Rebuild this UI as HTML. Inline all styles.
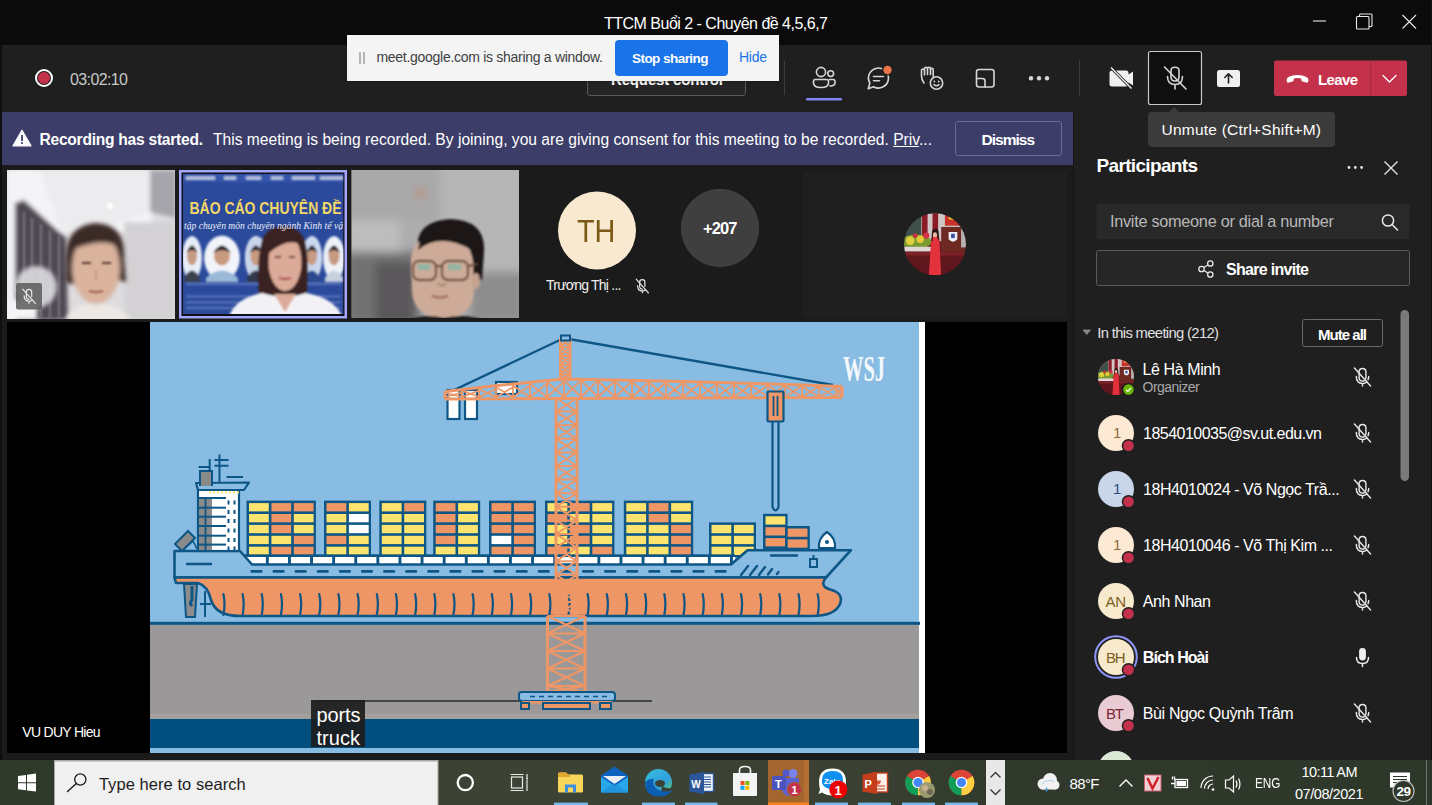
<!DOCTYPE html>
<html><head><meta charset="utf-8">
<style>
*{box-sizing:border-box;margin:0;padding:0}
html,body{width:1432px;height:805px;overflow:hidden;background:#1b1b1b;font-family:"Liberation Sans",sans-serif;}
.a{position:absolute;}
.t{position:absolute;white-space:nowrap;line-height:1;}
</style></head><body>
<!-- title bar -->
<div class="a" style="left:0;top:0;width:1432px;height:45px;background:#0b0b0b"></div>
<div class="t" style="left:604.0px;top:16.00px;font-size:16.0px;color:#fff;letter-spacing:-0.508px;">TTCM Buổi 2 - Chuyên đề 4,5,6,7</div>
<!-- toolbar -->
<div class="a" style="left:0;top:45px;width:1432px;height:67px;background:#1f1f1f"></div>
<!-- left border -->
<div class="a" style="left:0;top:45px;width:2px;height:715px;background:#0f0f0f"></div>
<!-- window right border -->
<div class="a" style="left:1431px;top:0;width:1px;height:760px;background:#121212"></div>
<!-- banner -->
<div class="a" style="left:2px;top:112px;width:1071px;height:53px;background:#3c3d68"></div>
<!-- right panel -->
<div class="a" style="left:1073px;top:112px;width:1px;height:648px;background:#141414"></div>
<div class="a" style="left:1074px;top:112px;width:357px;height:648px;background:#1f1f1f"></div>
<!-- main share area -->
<div class="a" style="left:7px;top:322px;width:1060px;height:431px;background:#000"></div>
<svg class="a" style="left:0;top:165px" width="1073" height="157" viewBox="0 165 1073 157">
<defs>
<filter id="b1" x="-20%" y="-20%" width="140%" height="140%"><feGaussianBlur stdDeviation="2.2"/></filter>
<filter id="b2" x="-20%" y="-20%" width="140%" height="140%"><feGaussianBlur stdDeviation="1.2"/></filter>
<filter id="b3" x="-50%" y="-50%" width="200%" height="200%"><feGaussianBlur stdDeviation="5"/></filter>
<clipPath id="c1"><rect x="7" y="170" width="168" height="149"/></clipPath>
<clipPath id="c2"><rect x="183" y="174" width="160.5" height="140"/></clipPath>
<clipPath id="c3"><rect x="351.5" y="170" width="167.5" height="148"/></clipPath>
<clipPath id="c5"><circle cx="935" cy="244.3" r="31"/></clipPath>
<linearGradient id="g3" x1="0" y1="0" x2="1" y2="0"><stop offset="0" stop-color="#7e7c7d"/><stop offset="0.5" stop-color="#a4a3a4"/><stop offset="1" stop-color="#b9b8b9"/></linearGradient>
</defs>
<rect x="803" y="171.5" width="264" height="146" fill="#1f1f1f"/>
<g clip-path="url(#c1)">
<rect x="7" y="170" width="168" height="149" fill="#dedcdf"/>
<g filter="url(#b1)">
<rect x="7" y="170" width="145" height="62" fill="#f4f3f5"/>
<path d="M40 170 H150 V212 Q120 222 90 236 L60 228 Z" fill="#ecebee"/>
<path d="M150 170 H176 V218 Q160 214 150 212 Z" fill="#a6a5ab"/>
<rect x="124" y="222" width="52" height="98" fill="#d3d1d4"/>
<rect x="7" y="200" width="10" height="120" fill="#f2f2f4"/>
<path d="M15 203 L24 200 L66 238 L68 320 L15 320 Z" fill="#4f4a55"/>
</g>
<g filter="url(#b2)" stroke="#7a7580" stroke-width="2" fill="none"><path d="M24 212 V318 M32 218 V318 M41 224 V318 M50 230 V318 M59 236 V318"/></g>
<g filter="url(#b1)">
<circle cx="36" cy="287" r="21" fill="#dddce0" fill-opacity="0.9"/>
<rect x="7" y="300" width="30" height="20" fill="#f4f4f6"/>
<path d="M66 262 Q64 226 95 223 Q126 224 124 258 L126 282 L118 280 L117 250 Q100 238 76 250 L74 285 L66 282 Z" fill="#3b2a26"/>
<ellipse cx="96" cy="268" rx="24" ry="36" fill="#dab39d"/>
<path d="M72 248 Q80 230 96 230 Q114 230 120 248 Q104 236 72 250 Z" fill="#3b2a26"/>
<path d="M64 320 Q80 300 96 306 Q114 300 132 320 Z" fill="#efe9e6"/>
</g>
<g filter="url(#b2)"><path d="M82 263 H91 M102 263 H111" stroke="#5a3a30" stroke-width="2.2"/><path d="M96 270 V280" stroke="#c09080" stroke-width="1.5"/><path d="M89 291 Q96 293 103 291" stroke="#a05a50" stroke-width="2.2"/><circle cx="110" cy="206" r="3" fill="#fff"/></g>
</g>
<rect x="16" y="283" width="26" height="26.5" rx="2" fill="#5a5a5a" fill-opacity="0.85"/>
<g transform="translate(29 296.2) scale(0.75)" fill="none" stroke="#e8e8e8" stroke-width="1.6" stroke-linecap="round">
<path d="M-3.6 -4 V-5.5 Q-3.6 -9 0 -9 Q3.6 -9 3.6 -5.5 V0.5 M-3.6 -4 V0.5 Q-3.6 4.3 0 4.3"/>
<path d="M-6.5 -0.5 Q-6.5 6.8 0 6.8 Q2.8 6.8 4.5 5.2 M0 6.8 V9.5"/><path d="M-8.5 -9.5 L8.5 9.5"/></g>
<rect x="179" y="170" width="168" height="148.5" fill="#a4a7ff"/>
<rect x="181.5" y="172.5" width="163" height="143.5" fill="#101018"/>
<g clip-path="url(#c2)">
<rect x="183" y="174" width="160.5" height="140" fill="#2b4a9c"/>
<g filter="url(#b2)">
<rect x="183" y="174" width="160.5" height="8" fill="#3456aa"/>
<rect x="186" y="176.5" width="29" height="3" fill="#c8d0ea"/>
<rect x="224" y="176.5" width="12" height="3" fill="#c8d0ea"/>
<rect x="246" y="176.5" width="15" height="3" fill="#c8d0ea"/>
<rect x="271" y="176.5" width="12" height="3" fill="#c8d0ea"/>
<rect x="292" y="176.5" width="23" height="3" fill="#c8d0ea"/>
<rect x="320" y="176.5" width="23" height="3" fill="#c8d0ea"/>
<ellipse cx="192" cy="258" rx="10" ry="22" fill="#dfe6f4"/>
<ellipse cx="192" cy="258" rx="8.5" ry="20.5" fill="#e8eef8"/>
<path d="M184.0 278 Q192 263 200.0 278 V282 H184.0 Z" fill="#3a4050"/>
<ellipse cx="192" cy="256" rx="5.0" ry="9.2" fill="#c89a80"/>
<path d="M186.5 253 Q192 238 197.5 253 Q192 247 186.5 253 Z" fill="#1e1e22"/>
<ellipse cx="222" cy="258" rx="18" ry="22.5" fill="#dfe6f4"/>
<ellipse cx="222" cy="258" rx="16.5" ry="21.0" fill="#f2f4fa"/>
<path d="M206.0 278 Q222 263 238.0 278 V282 H206.0 Z" fill="#9ab8d8"/>
<ellipse cx="222" cy="256" rx="8.0" ry="9.4" fill="#c89a80"/>
<path d="M213.2 253 Q222 238 230.8 253 Q222 247 213.2 253 Z" fill="#1e1e22"/>
<ellipse cx="256" cy="258" rx="11" ry="22" fill="#dfe6f4"/>
<ellipse cx="256" cy="258" rx="9.5" ry="20.5" fill="#c8d4e8"/>
<path d="M247.0 278 Q256 263 265.0 278 V282 H247.0 Z" fill="#303848"/>
<ellipse cx="256" cy="256" rx="5.5" ry="9.2" fill="#c89a80"/>
<path d="M249.9 253 Q256 238 262.1 253 Q256 247 249.9 253 Z" fill="#1e1e22"/>
<ellipse cx="312" cy="258" rx="10" ry="22" fill="#dfe6f4"/>
<ellipse cx="312" cy="258" rx="8.5" ry="20.5" fill="#c8d8f0"/>
<path d="M304.0 278 Q312 263 320.0 278 V282 H304.0 Z" fill="#2a4a90"/>
<ellipse cx="312" cy="256" rx="5.0" ry="9.2" fill="#c89a80"/>
<path d="M306.5 253 Q312 238 317.5 253 Q312 247 306.5 253 Z" fill="#1e1e22"/>
<ellipse cx="334" cy="258" rx="11" ry="22" fill="#dfe6f4"/>
<ellipse cx="334" cy="258" rx="9.5" ry="20.5" fill="#eef2f8"/>
<path d="M325.0 278 Q334 263 343.0 278 V282 H325.0 Z" fill="#c8d0e0"/>
<ellipse cx="334" cy="256" rx="5.5" ry="9.2" fill="#c89a80"/>
<path d="M327.9 253 Q334 238 340.1 253 Q334 247 327.9 253 Z" fill="#1e1e22"/>
<rect x="186" y="283" width="155" height="1.8" fill="#8ea2d8" fill-opacity="0.55"/>
<rect x="186" y="295.5" width="155" height="1.8" fill="#8ea2d8" fill-opacity="0.55"/>
<rect x="186" y="301.5" width="155" height="1.8" fill="#8ea2d8" fill-opacity="0.55"/>
<rect x="186" y="307" width="155" height="1.8" fill="#8ea2d8" fill-opacity="0.55"/>
<path d="M259 300 Q256 262 262 240 Q268 226 284 226 Q302 227 306 245 Q310 268 306 300 Z" fill="#3a2420"/>
<ellipse cx="285" cy="262" rx="16.5" ry="29" fill="#dcaa98"/>
<path d="M266 250 Q268 232 285 232 Q300 232 303 246 Q290 236 270 252 Z" fill="#3a2420"/>
<path d="M229 316 Q236 298 262 293 Q285 300 306 293 Q334 298 342 316 Z" fill="#f2f2f6"/>
<path d="M274 294 L285 312 L296 294 Z" fill="#dcaa98"/>
</g>
<g filter="url(#b2)"><path d="M275 257 H281 M289 257 H295" stroke="#5a3a30" stroke-width="1.6"/><path d="M279 278 Q285 280 291 278" stroke="#a04848" stroke-width="1.8"/></g>
</g>
<text x="189.5" y="214" font-family="Liberation Sans" font-weight="bold" font-size="16.5" fill="#f3d766" textLength="152" lengthAdjust="spacingAndGlyphs">BÁO CÁO CHUYÊN ĐỀ</text>
<text x="184" y="229" font-family="Liberation Serif" font-style="italic" font-size="11" fill="#e8ecf8" textLength="159" lengthAdjust="spacingAndGlyphs">tập chuyên môn chuyên ngành Kinh tế vậ</text>
<g clip-path="url(#c3)">
<rect x="351.5" y="170" width="167.5" height="148" fill="#adadad"/>
<g filter="url(#b3)">
<rect x="340" y="160" width="190" height="60" fill="#a9a9aa"/>
<rect x="440" y="160" width="90" height="120" fill="#b6b6b7"/>
<rect x="345" y="220" width="55" height="32" fill="#bdbdbe"/>
<path d="M345 252 H420 V325 H345 Z" fill="#737273"/>
<path d="M375 262 H415 V325 H375 Z" fill="#5a595a"/>
<rect x="470" y="272" width="55" height="50" fill="#8e8d8e"/>
<circle cx="421" cy="193" r="4.5" fill="#c08a60"/>
</g>
<g filter="url(#b2)">
<path d="M418 250 Q414 222 450 219 Q486 220 484 252 L482 280 L472 280 L470 250 Q450 238 422 252 Z" fill="#1a1818"/>
<path d="M411 262 Q411 236 440 236 Q470 236 473 262 L474 292 Q472 317 444 318 Q414 317 412 292 Z" fill="#cdab98"/>
<path d="M418 250 Q440 232 472 250 L470 240 Q450 226 420 240 Z" fill="#1a1818"/>
<ellipse cx="476" cy="281" rx="4" ry="8" fill="#c4a290"/>
<path d="M400 325 Q420 312 444 318 Q470 312 495 325 Z" fill="#1a1a1a"/>
</g>
<g filter="url(#b2)" fill="none" stroke="#6a5040" stroke-width="1.8"><rect x="413" y="261" width="23" height="19" rx="6"/><rect x="442" y="261" width="26" height="19" rx="6"/><path d="M436 266 H442 M468 266 L478 264"/></g>
<g filter="url(#b2)"><rect x="418" y="264" width="12" height="6" fill="#7ab8a8" fill-opacity="0.7"/><rect x="448" y="264" width="13" height="6" fill="#7ab8a8" fill-opacity="0.7"/><path d="M438 283 Q442 288 446 283" stroke="#a07a68" stroke-width="1.5" fill="none"/><path d="M432 296 Q440 299 448 296" stroke="#9a6a5a" stroke-width="2" fill="none"/></g>
</g>
<circle cx="597" cy="230.5" r="39" fill="#f8e9d0"/>
<circle cx="720" cy="228" r="39.2" fill="#3f3f3f"/>
<g transform="translate(642.3 286) scale(0.72)" fill="none" stroke="#e8e8e8" stroke-width="1.7" stroke-linecap="round">
<path d="M-3.6 -4 V-5.5 Q-3.6 -9 0 -9 Q3.6 -9 3.6 -5.5 V0.5 M-3.6 -4 V0.5 Q-3.6 4.3 0 4.3"/>
<path d="M-6.5 -0.5 Q-6.5 6.8 0 6.8 Q2.8 6.8 4.5 5.2 M0 6.8 V9.5"/><path d="M-8.5 -9.5 L8.5 9.5"/></g>
<defs><clipPath id="c5x"><circle cx="935" cy="244.3" r="31"/></clipPath></defs><g clip-path="url(#c5x)"><g transform="translate(904 213.3) scale(0.6200)" filter="url(#b2)"><rect x="0" y="0" width="100" height="100" fill="#6a1c22"/><rect x="0" y="0" width="100" height="45" fill="#cfc6c6"/><rect x="0" y="0" width="28" height="40" fill="#3f5048"/><rect x="29" y="0" width="9" height="42" fill="#8a1a28"/><rect x="46" y="0" width="9" height="38" fill="#8a1a28"/><rect x="66" y="0" width="34" height="20" fill="#c8302a"/><rect x="72" y="6" width="20" height="4" fill="#e8c040"/><rect x="60" y="22" width="40" height="40" fill="#6e2a22"/><path d="M72 30 H86 V42 Q79 50 72 42 Z" fill="#eef0f8"/><rect x="76" y="33" width="6" height="7" fill="#4050a0"/><rect x="92" y="25" width="8" height="30" fill="#b8b0b0"/><ellipse cx="20" cy="46" rx="24" ry="12" fill="#7a9a30"/><circle cx="10" cy="44" r="7" fill="#e0d040"/><circle cx="26" cy="42" r="6" fill="#e8c838"/><circle cx="36" cy="36" r="5" fill="#d83048"/><circle cx="18" cy="36" r="4" fill="#c83040"/><rect x="0" y="54" width="48" height="8" fill="#e0d8d8"/><rect x="0" y="62" width="100" height="38" fill="#5e161c"/><path d="M0 62 H100 V68 H0 Z" fill="#7a2028"/><path d="M44 40 Q50 34 57 40 L60 100 H40 Z" fill="#e2303a"/><ellipse cx="50" cy="33" rx="4.5" ry="5.5" fill="#e8b8a0"/><path d="M45 32 Q45 25 50 25 Q56 25 56 32 L57 46 L54 40 L53 32 Q50 29 47 32 L46 44 L44 46 Z" fill="#2a1818"/></g></g>
</svg>
<div class="t" style="left:577.0px;top:216.00px;font-size:31.0px;color:#7a5a14;transform:scaleX(0.93);transform-origin:0 0;">TH</div>
<div class="t" style="left:703.0px;top:220.00px;font-size:16.5px;font-weight:bold;color:#fff;letter-spacing:-0.924px;">+207</div>
<div class="t" style="left:546.0px;top:278.00px;font-size:14.0px;color:#f0f0f0;letter-spacing:-0.775px;">Trương Thị ...</div>
<svg class="a" style="left:150px;top:322px" width="775" height="431" viewBox="150 322 775 431">
<rect x="150" y="322" width="770" height="302" fill="#89bce3"/>
<rect x="150" y="624" width="770" height="92" fill="#9a9899"/>
<rect x="150" y="714" width="770" height="5" fill="#a39f9c"/>
<rect x="150" y="719" width="770" height="29" fill="#004f7e"/>
<rect x="150" y="748" width="770" height="5" fill="#89bce3"/>
<rect x="919" y="322" width="6" height="431" fill="#fff"/>
<rect x="150" y="621.8" width="770" height="3" fill="#0d5685"/>
<text x="843" y="381" font-family="Liberation Serif" font-weight="bold" font-size="35" fill="#f4f8fb" textLength="42" lengthAdjust="spacingAndGlyphs">WSJ</text>
<path d="M562 339 L452 391 M569 339 L833 385" stroke="#0d5685" stroke-width="2.4" fill="none"/>
<rect x="447.5" y="390" width="12" height="29" fill="#fff" stroke="#0d5685" stroke-width="2.2"/>
<rect x="465" y="390" width="12" height="29" fill="#fff" stroke="#0d5685" stroke-width="2.2"/>
<rect x="496" y="382" width="21" height="12" fill="#fff" stroke="#0d5685" stroke-width="2.2"/>
<rect x="246.5" y="500.6" width="69.4" height="56.7" fill="#0d5685"/>
<rect x="249.0" y="503.1" width="19.8" height="8.3" fill="#fde46f"/>
<rect x="271.4" y="503.1" width="19.8" height="8.3" fill="#ee9666"/>
<rect x="293.8" y="503.1" width="19.8" height="8.3" fill="#ee9666"/>
<rect x="249.0" y="514.0" width="19.8" height="8.3" fill="#fde46f"/>
<rect x="271.4" y="514.0" width="19.8" height="8.3" fill="#ee9666"/>
<rect x="293.8" y="514.0" width="19.8" height="8.3" fill="#fde46f"/>
<rect x="249.0" y="524.9" width="19.8" height="8.3" fill="#fde46f"/>
<rect x="271.4" y="524.9" width="19.8" height="8.3" fill="#ee9666"/>
<rect x="293.8" y="524.9" width="19.8" height="8.3" fill="#fde46f"/>
<rect x="249.0" y="535.8" width="19.8" height="8.3" fill="#fde46f"/>
<rect x="271.4" y="535.8" width="19.8" height="8.3" fill="#fde46f"/>
<rect x="293.8" y="535.8" width="19.8" height="8.3" fill="#ee9666"/>
<rect x="249.0" y="546.7" width="19.8" height="8.3" fill="#fde46f"/>
<rect x="271.4" y="546.7" width="19.8" height="8.3" fill="#ee9666"/>
<rect x="293.8" y="546.7" width="19.8" height="8.3" fill="#ee9666"/>
<rect x="324.0" y="500.6" width="47.0" height="56.7" fill="#0d5685"/>
<rect x="326.5" y="503.1" width="19.8" height="8.3" fill="#ee9666"/>
<rect x="348.9" y="503.1" width="19.8" height="8.3" fill="#fde46f"/>
<rect x="326.5" y="514.0" width="19.8" height="8.3" fill="#fde46f"/>
<rect x="348.9" y="514.0" width="19.8" height="8.3" fill="#ffffff"/>
<rect x="326.5" y="524.9" width="19.8" height="8.3" fill="#fde46f"/>
<rect x="348.9" y="524.9" width="19.8" height="8.3" fill="#ffffff"/>
<rect x="326.5" y="535.8" width="19.8" height="8.3" fill="#ee9666"/>
<rect x="348.9" y="535.8" width="19.8" height="8.3" fill="#fde46f"/>
<rect x="326.5" y="546.7" width="19.8" height="8.3" fill="#fde46f"/>
<rect x="348.9" y="546.7" width="19.8" height="8.3" fill="#fde46f"/>
<rect x="379.3" y="500.6" width="47.0" height="56.7" fill="#0d5685"/>
<rect x="381.8" y="503.1" width="19.8" height="8.3" fill="#fde46f"/>
<rect x="404.2" y="503.1" width="19.8" height="8.3" fill="#ee9666"/>
<rect x="381.8" y="514.0" width="19.8" height="8.3" fill="#fde46f"/>
<rect x="404.2" y="514.0" width="19.8" height="8.3" fill="#fde46f"/>
<rect x="381.8" y="524.9" width="19.8" height="8.3" fill="#fde46f"/>
<rect x="404.2" y="524.9" width="19.8" height="8.3" fill="#fde46f"/>
<rect x="381.8" y="535.8" width="19.8" height="8.3" fill="#fde46f"/>
<rect x="404.2" y="535.8" width="19.8" height="8.3" fill="#fde46f"/>
<rect x="381.8" y="546.7" width="19.8" height="8.3" fill="#fde46f"/>
<rect x="404.2" y="546.7" width="19.8" height="8.3" fill="#fde46f"/>
<rect x="433.2" y="500.6" width="47.0" height="56.7" fill="#0d5685"/>
<rect x="435.7" y="503.1" width="19.8" height="8.3" fill="#ee9666"/>
<rect x="458.1" y="503.1" width="19.8" height="8.3" fill="#fde46f"/>
<rect x="435.7" y="514.0" width="19.8" height="8.3" fill="#ee9666"/>
<rect x="458.1" y="514.0" width="19.8" height="8.3" fill="#fde46f"/>
<rect x="435.7" y="524.9" width="19.8" height="8.3" fill="#ee9666"/>
<rect x="458.1" y="524.9" width="19.8" height="8.3" fill="#fde46f"/>
<rect x="435.7" y="535.8" width="19.8" height="8.3" fill="#ee9666"/>
<rect x="458.1" y="535.8" width="19.8" height="8.3" fill="#fde46f"/>
<rect x="435.7" y="546.7" width="19.8" height="8.3" fill="#fde46f"/>
<rect x="458.1" y="546.7" width="19.8" height="8.3" fill="#fde46f"/>
<rect x="489.0" y="500.6" width="47.0" height="56.7" fill="#0d5685"/>
<rect x="491.5" y="503.1" width="19.8" height="8.3" fill="#ee9666"/>
<rect x="513.9" y="503.1" width="19.8" height="8.3" fill="#ee9666"/>
<rect x="491.5" y="514.0" width="19.8" height="8.3" fill="#ee9666"/>
<rect x="513.9" y="514.0" width="19.8" height="8.3" fill="#ee9666"/>
<rect x="491.5" y="524.9" width="19.8" height="8.3" fill="#ee9666"/>
<rect x="513.9" y="524.9" width="19.8" height="8.3" fill="#ee9666"/>
<rect x="491.5" y="535.8" width="19.8" height="8.3" fill="#ffffff"/>
<rect x="513.9" y="535.8" width="19.8" height="8.3" fill="#ee9666"/>
<rect x="491.5" y="546.7" width="19.8" height="8.3" fill="#ee9666"/>
<rect x="513.9" y="546.7" width="19.8" height="8.3" fill="#ee9666"/>
<rect x="545.0" y="500.6" width="69.4" height="56.7" fill="#0d5685"/>
<rect x="547.5" y="503.1" width="19.8" height="8.3" fill="#fde46f"/>
<rect x="569.9" y="503.1" width="19.8" height="8.3" fill="#ee9666"/>
<rect x="592.3" y="503.1" width="19.8" height="8.3" fill="#fde46f"/>
<rect x="547.5" y="514.0" width="19.8" height="8.3" fill="#ee9666"/>
<rect x="569.9" y="514.0" width="19.8" height="8.3" fill="#fde46f"/>
<rect x="592.3" y="514.0" width="19.8" height="8.3" fill="#fde46f"/>
<rect x="547.5" y="524.9" width="19.8" height="8.3" fill="#fde46f"/>
<rect x="569.9" y="524.9" width="19.8" height="8.3" fill="#ee9666"/>
<rect x="592.3" y="524.9" width="19.8" height="8.3" fill="#fde46f"/>
<rect x="547.5" y="535.8" width="19.8" height="8.3" fill="#fde46f"/>
<rect x="569.9" y="535.8" width="19.8" height="8.3" fill="#ee9666"/>
<rect x="592.3" y="535.8" width="19.8" height="8.3" fill="#fde46f"/>
<rect x="547.5" y="546.7" width="19.8" height="8.3" fill="#ee9666"/>
<rect x="569.9" y="546.7" width="19.8" height="8.3" fill="#fde46f"/>
<rect x="592.3" y="546.7" width="19.8" height="8.3" fill="#ee9666"/>
<rect x="623.8" y="500.6" width="69.4" height="56.7" fill="#0d5685"/>
<rect x="626.3" y="503.1" width="19.8" height="8.3" fill="#fde46f"/>
<rect x="648.7" y="503.1" width="19.8" height="8.3" fill="#ee9666"/>
<rect x="671.1" y="503.1" width="19.8" height="8.3" fill="#fde46f"/>
<rect x="626.3" y="514.0" width="19.8" height="8.3" fill="#fde46f"/>
<rect x="648.7" y="514.0" width="19.8" height="8.3" fill="#ee9666"/>
<rect x="671.1" y="514.0" width="19.8" height="8.3" fill="#fde46f"/>
<rect x="626.3" y="524.9" width="19.8" height="8.3" fill="#fde46f"/>
<rect x="648.7" y="524.9" width="19.8" height="8.3" fill="#fde46f"/>
<rect x="671.1" y="524.9" width="19.8" height="8.3" fill="#ee9666"/>
<rect x="626.3" y="535.8" width="19.8" height="8.3" fill="#fde46f"/>
<rect x="648.7" y="535.8" width="19.8" height="8.3" fill="#fde46f"/>
<rect x="671.1" y="535.8" width="19.8" height="8.3" fill="#ee9666"/>
<rect x="626.3" y="546.7" width="19.8" height="8.3" fill="#fde46f"/>
<rect x="648.7" y="546.7" width="19.8" height="8.3" fill="#fde46f"/>
<rect x="671.1" y="546.7" width="19.8" height="8.3" fill="#ee9666"/>
<rect x="709.0" y="522.4" width="47.0" height="34.9" fill="#0d5685"/>
<rect x="711.5" y="524.9" width="19.8" height="8.3" fill="#fde46f"/>
<rect x="733.9" y="524.9" width="19.8" height="8.3" fill="#fde46f"/>
<rect x="711.5" y="535.8" width="19.8" height="8.3" fill="#fde46f"/>
<rect x="733.9" y="535.8" width="19.8" height="8.3" fill="#fde46f"/>
<rect x="711.5" y="546.7" width="19.8" height="8.3" fill="#fde46f"/>
<rect x="733.9" y="546.7" width="19.8" height="8.3" fill="#fde46f"/>
<rect x="763.0" y="513.8" width="24.6" height="45.8" fill="#0d5685"/>
<rect x="765.5" y="516.3" width="19.8" height="8.3" fill="#fde46f"/>
<rect x="765.5" y="527.2" width="19.8" height="8.3" fill="#ee9666"/>
<rect x="765.5" y="538.1" width="19.8" height="8.3" fill="#ee9666"/>
<rect x="765.5" y="549.0" width="19.8" height="8.3" fill="#ee9666"/>
<rect x="785.2" y="526.0" width="24.6" height="24.0" fill="#0d5685"/>
<rect x="787.7" y="528.5" width="19.8" height="8.3" fill="#ee9666"/>
<rect x="787.7" y="539.4" width="19.8" height="8.3" fill="#ee9666"/>
<rect x="245" y="554.3" width="490" height="12" fill="#0d5685"/>
<rect x="246.7" y="557" width="19.2" height="7.2" fill="#fff"/>
<rect x="268.8" y="557" width="19.2" height="7.2" fill="#fff"/>
<rect x="290.9" y="557" width="19.2" height="7.2" fill="#fff"/>
<rect x="313.0" y="557" width="19.2" height="7.2" fill="#fff"/>
<rect x="335.1" y="557" width="19.2" height="7.2" fill="#fff"/>
<rect x="357.2" y="557" width="19.2" height="7.2" fill="#fff"/>
<rect x="379.3" y="557" width="19.2" height="7.2" fill="#fff"/>
<rect x="401.4" y="557" width="19.2" height="7.2" fill="#fff"/>
<rect x="423.5" y="557" width="19.2" height="7.2" fill="#fff"/>
<rect x="445.6" y="557" width="19.2" height="7.2" fill="#fff"/>
<rect x="467.7" y="557" width="19.2" height="7.2" fill="#fff"/>
<rect x="489.8" y="557" width="19.2" height="7.2" fill="#fff"/>
<rect x="511.9" y="557" width="19.2" height="7.2" fill="#fff"/>
<rect x="534.0" y="557" width="19.2" height="7.2" fill="#fff"/>
<rect x="556.1" y="557" width="19.2" height="7.2" fill="#fff"/>
<rect x="578.2" y="557" width="19.2" height="7.2" fill="#fff"/>
<rect x="600.3" y="557" width="19.2" height="7.2" fill="#fff"/>
<rect x="622.4" y="557" width="19.2" height="7.2" fill="#fff"/>
<rect x="644.5" y="557" width="19.2" height="7.2" fill="#fff"/>
<rect x="666.6" y="557" width="19.2" height="7.2" fill="#fff"/>
<rect x="688.7" y="557" width="19.2" height="7.2" fill="#fff"/>
<rect x="710.8" y="557" width="19.2" height="7.2" fill="#fff"/>
<rect x="732.9" y="557" width="2.1" height="7.2" fill="#fff"/>
<path d="M174.5 551 H240 L252 564.5 H731 L747.5 550.2 H851 L826 577.5 H174.5 Z" fill="#89bce3" stroke="#0d5685" stroke-width="2.6" stroke-linejoin="round"/>
<rect x="250.5" y="570" width="12" height="2.8" rx="1" fill="#0d5685"/>
<rect x="272.6" y="570" width="12" height="2.8" rx="1" fill="#0d5685"/>
<rect x="294.7" y="570" width="12" height="2.8" rx="1" fill="#0d5685"/>
<rect x="316.8" y="570" width="12" height="2.8" rx="1" fill="#0d5685"/>
<rect x="338.9" y="570" width="12" height="2.8" rx="1" fill="#0d5685"/>
<rect x="361.0" y="570" width="12" height="2.8" rx="1" fill="#0d5685"/>
<rect x="383.1" y="570" width="12" height="2.8" rx="1" fill="#0d5685"/>
<rect x="405.2" y="570" width="12" height="2.8" rx="1" fill="#0d5685"/>
<rect x="427.3" y="570" width="12" height="2.8" rx="1" fill="#0d5685"/>
<rect x="449.4" y="570" width="12" height="2.8" rx="1" fill="#0d5685"/>
<rect x="471.5" y="570" width="12" height="2.8" rx="1" fill="#0d5685"/>
<rect x="493.6" y="570" width="12" height="2.8" rx="1" fill="#0d5685"/>
<rect x="515.7" y="570" width="12" height="2.8" rx="1" fill="#0d5685"/>
<rect x="537.8" y="570" width="12" height="2.8" rx="1" fill="#0d5685"/>
<rect x="559.9" y="570" width="12" height="2.8" rx="1" fill="#0d5685"/>
<rect x="582.0" y="570" width="12" height="2.8" rx="1" fill="#0d5685"/>
<rect x="604.1" y="570" width="12" height="2.8" rx="1" fill="#0d5685"/>
<rect x="626.2" y="570" width="12" height="2.8" rx="1" fill="#0d5685"/>
<rect x="648.3" y="570" width="12" height="2.8" rx="1" fill="#0d5685"/>
<rect x="670.4" y="570" width="12" height="2.8" rx="1" fill="#0d5685"/>
<rect x="692.5" y="570" width="12" height="2.8" rx="1" fill="#0d5685"/>
<rect x="714.6" y="570" width="12" height="2.8" rx="1" fill="#0d5685"/>
<path d="M741 575 L748 566 M750 575 L757 566 M759 575 L765 567 M768 574.5 L772 569 M777 574 L778.5 572" stroke="#0d5685" stroke-width="2.4" stroke-linecap="round"/>
<path d="M187 564 H211 M771 555.5 H797" stroke="#0d5685" stroke-width="2.4" stroke-linecap="round"/>
<path d="M810 567 V559 H817 V567 Z M813.5 559 V555" fill="none" stroke="#0d5685" stroke-width="2"/>
<path d="M819 548 Q818 538 827 532 Q836 538 835 548 Z" fill="#fff" stroke="#0d5685" stroke-width="2.2"/>
<circle cx="827" cy="542" r="2" fill="#0d5685"/>
<path d="M174.5 577.5 H826 Q819 586 830 589.5 Q844 593 840 604 Q835 616 812 616 H240 Q216 616 211 600 Q208 586 198 583 H176 Z" fill="#ee9666" stroke="#0d5685" stroke-width="2.6" stroke-linejoin="round"/>
<path d="M223.4 594 Q225.6 604 223.4 615" fill="none" stroke="#0d5685" stroke-width="2.2" stroke-linecap="round"/>
<path d="M242.6 594 Q244.8 604 242.6 615" fill="none" stroke="#0d5685" stroke-width="2.2" stroke-linecap="round"/>
<path d="M261.7 594 Q263.9 604 261.7 615" fill="none" stroke="#0d5685" stroke-width="2.2" stroke-linecap="round"/>
<path d="M280.9 594 Q283.1 604 280.9 615" fill="none" stroke="#0d5685" stroke-width="2.2" stroke-linecap="round"/>
<path d="M300.1 594 Q302.3 604 300.1 615" fill="none" stroke="#0d5685" stroke-width="2.2" stroke-linecap="round"/>
<path d="M319.2 594 Q321.4 604 319.2 615" fill="none" stroke="#0d5685" stroke-width="2.2" stroke-linecap="round"/>
<path d="M338.4 594 Q340.6 604 338.4 615" fill="none" stroke="#0d5685" stroke-width="2.2" stroke-linecap="round"/>
<path d="M357.6 594 Q359.8 604 357.6 615" fill="none" stroke="#0d5685" stroke-width="2.2" stroke-linecap="round"/>
<path d="M376.8 594 Q379.0 604 376.8 615" fill="none" stroke="#0d5685" stroke-width="2.2" stroke-linecap="round"/>
<path d="M395.9 594 Q398.1 604 395.9 615" fill="none" stroke="#0d5685" stroke-width="2.2" stroke-linecap="round"/>
<path d="M415.1 594 Q417.3 604 415.1 615" fill="none" stroke="#0d5685" stroke-width="2.2" stroke-linecap="round"/>
<path d="M434.3 594 Q436.5 604 434.3 615" fill="none" stroke="#0d5685" stroke-width="2.2" stroke-linecap="round"/>
<path d="M453.4 594 Q455.6 604 453.4 615" fill="none" stroke="#0d5685" stroke-width="2.2" stroke-linecap="round"/>
<path d="M472.6 594 Q474.8 604 472.6 615" fill="none" stroke="#0d5685" stroke-width="2.2" stroke-linecap="round"/>
<path d="M491.8 594 Q494.0 604 491.8 615" fill="none" stroke="#0d5685" stroke-width="2.2" stroke-linecap="round"/>
<path d="M511.0 594 Q513.2 604 511.0 615" fill="none" stroke="#0d5685" stroke-width="2.2" stroke-linecap="round"/>
<path d="M530.1 594 Q532.3 604 530.1 615" fill="none" stroke="#0d5685" stroke-width="2.2" stroke-linecap="round"/>
<path d="M549.3 594 Q551.5 604 549.3 615" fill="none" stroke="#0d5685" stroke-width="2.2" stroke-linecap="round"/>
<path d="M568.5 594 Q570.7 604 568.5 615" fill="none" stroke="#0d5685" stroke-width="2.2" stroke-linecap="round"/>
<path d="M587.6 594 Q589.8 604 587.6 615" fill="none" stroke="#0d5685" stroke-width="2.2" stroke-linecap="round"/>
<path d="M606.8 594 Q609.0 604 606.8 615" fill="none" stroke="#0d5685" stroke-width="2.2" stroke-linecap="round"/>
<path d="M626.0 594 Q628.2 604 626.0 615" fill="none" stroke="#0d5685" stroke-width="2.2" stroke-linecap="round"/>
<path d="M645.1 594 Q647.3 604 645.1 615" fill="none" stroke="#0d5685" stroke-width="2.2" stroke-linecap="round"/>
<path d="M664.3 594 Q666.5 604 664.3 615" fill="none" stroke="#0d5685" stroke-width="2.2" stroke-linecap="round"/>
<path d="M683.5 594 Q685.7 604 683.5 615" fill="none" stroke="#0d5685" stroke-width="2.2" stroke-linecap="round"/>
<path d="M702.7 594 Q704.9 604 702.7 615" fill="none" stroke="#0d5685" stroke-width="2.2" stroke-linecap="round"/>
<path d="M721.8 594 Q724.0 604 721.8 615" fill="none" stroke="#0d5685" stroke-width="2.2" stroke-linecap="round"/>
<path d="M741.0 594 Q743.2 604 741.0 615" fill="none" stroke="#0d5685" stroke-width="2.2" stroke-linecap="round"/>
<path d="M760.2 594 Q762.4 604 760.2 615" fill="none" stroke="#0d5685" stroke-width="2.2" stroke-linecap="round"/>
<path d="M779.3 594 Q781.5 604 779.3 615" fill="none" stroke="#0d5685" stroke-width="2.2" stroke-linecap="round"/>
<path d="M798.5 594 Q800.7 604 798.5 615" fill="none" stroke="#0d5685" stroke-width="2.2" stroke-linecap="round"/>
<path d="M817.7 594 Q819.9 604 817.7 615" fill="none" stroke="#0d5685" stroke-width="2.2" stroke-linecap="round"/>
<path d="M184 584 H197 L195 617 H186 Z" fill="#8c8c8c" stroke="#0d5685" stroke-width="2"/>
<path d="M192 586 V600 Q189 603 192 606" stroke="#0d5685" stroke-width="3" fill="none"/>
<path d="M205 591 V617 M200 604 H211" stroke="#0d5685" stroke-width="2"/>
<rect x="198" y="487" width="41" height="64" fill="#fff" stroke="#0d5685" stroke-width="2.2"/>
<rect x="199" y="497" width="13" height="53" fill="#8a8a8a"/>
<path d="M199 498 H226" stroke="#0d5685" stroke-width="2"/>
<path d="M199 507.7 H226" stroke="#0d5685" stroke-width="2"/>
<path d="M199 516.7 H226" stroke="#0d5685" stroke-width="2"/>
<path d="M199 526 H226" stroke="#0d5685" stroke-width="2"/>
<path d="M199 535.7 H226" stroke="#0d5685" stroke-width="2"/>
<path d="M199 544.6 H226" stroke="#0d5685" stroke-width="2"/>
<path d="M205.5 497 V550" stroke="#0d5685" stroke-width="1.8"/>
<rect x="227.5" y="500.5" width="2" height="4" fill="#0d5685"/><rect x="233.5" y="500.5" width="2" height="4" fill="#0d5685"/>
<rect x="227.5" y="510" width="2" height="4" fill="#0d5685"/><rect x="233.5" y="510" width="2" height="4" fill="#0d5685"/>
<rect x="227.5" y="519" width="2" height="4" fill="#0d5685"/><rect x="233.5" y="519" width="2" height="4" fill="#0d5685"/>
<rect x="227.5" y="528.5" width="2" height="4" fill="#0d5685"/><rect x="233.5" y="528.5" width="2" height="4" fill="#0d5685"/>
<rect x="227.5" y="538" width="2" height="4" fill="#0d5685"/><rect x="233.5" y="538" width="2" height="4" fill="#0d5685"/>
<rect x="227.5" y="546.5" width="2" height="4" fill="#0d5685"/><rect x="233.5" y="546.5" width="2" height="4" fill="#0d5685"/>
<path d="M196 483 L249 482.5 L244 490 H198 Z" fill="#89bce3" stroke="#0d5685" stroke-width="2.2" stroke-linejoin="round"/>
<rect x="209" y="491.5" width="2" height="2" fill="#fde46f"/>
<rect x="213" y="491.5" width="2" height="2" fill="#fde46f"/>
<rect x="217" y="491.5" width="2" height="2" fill="#fde46f"/>
<rect x="221" y="491.5" width="2" height="2" fill="#fde46f"/>
<rect x="225" y="491.5" width="2" height="2" fill="#fde46f"/>
<rect x="229" y="491.5" width="2" height="2" fill="#fde46f"/>
<rect x="233" y="491.5" width="2" height="2" fill="#fde46f"/>
<rect x="237" y="491.5" width="2" height="2" fill="#fde46f"/>
<path d="M200 486 V471 H212 V486" fill="#8a8a8a" stroke="#0d5685" stroke-width="2"/>
<path d="M219.5 483 V454.5 M214.5 460 H228.5 M214.5 465.8 H228.5 M209.7 472 V459 M198.5 467 H209.7 M226.5 477 H243" stroke="#0d5685" stroke-width="2" fill="none"/>
<path d="M175 544 L188 531 L195 538 L182 551 Z" fill="#8a8a8a" stroke="#0d5685" stroke-width="2"/>
<path d="M184 549 L193 541 L197 549" stroke="#0d5685" stroke-width="1.6" fill="none"/>
<path d="M560.5 338 V381 M570 338 V381" stroke="#ee9666" stroke-width="3"/><path d="M560.5 338.0 L570 347.0 M570 338.0 L560.5 347.0 M560.5 338.0 H570 M560.5 347.0 L570 356.0 M570 347.0 L560.5 356.0 M560.5 347.0 H570 M560.5 356.0 L570 365.0 M570 356.0 L560.5 365.0 M560.5 356.0 H570 M560.5 365.0 L570 374.0 M570 365.0 L560.5 374.0 M560.5 365.0 H570 M560.5 374.0 L570 381.0 M570 374.0 L560.5 381.0 M560.5 374.0 H570 " stroke="#ee9666" stroke-width="2" fill="none"/>
<rect x="561" y="335.5" width="9" height="5" fill="#89bce3" stroke="#0d5685" stroke-width="2"/>
<path d="M556 398 V616 M577 398 V616" stroke="#ee9666" stroke-width="3"/><path d="M556 398.0 L577 411.6 M577 398.0 L556 411.6 M556 398.0 H577 M556 411.6 L577 425.2 M577 411.6 L556 425.2 M556 411.6 H577 M556 425.2 L577 438.8 M577 425.2 L556 438.8 M556 425.2 H577 M556 438.8 L577 452.4 M577 438.8 L556 452.4 M556 438.8 H577 M556 452.4 L577 466.0 M577 452.4 L556 466.0 M556 452.4 H577 M556 466.0 L577 479.6 M577 466.0 L556 479.6 M556 466.0 H577 M556 479.6 L577 493.2 M577 479.6 L556 493.2 M556 479.6 H577 M556 493.2 L577 506.8 M577 493.2 L556 506.8 M556 493.2 H577 M556 506.8 L577 520.4 M577 506.8 L556 520.4 M556 506.8 H577 M556 520.4 L577 534.0 M577 520.4 L556 534.0 M556 520.4 H577 M556 534.0 L577 547.6 M577 534.0 L556 547.6 M556 534.0 H577 M556 547.6 L577 561.2 M577 547.6 L556 561.2 M556 547.6 H577 M556 561.2 L577 574.8 M577 561.2 L556 574.8 M556 561.2 H577 M556 574.8 L577 588.4 M577 574.8 L556 588.4 M556 574.8 H577 M556 588.4 L577 602.0 M577 588.4 L556 602.0 M556 588.4 H577 M556 602.0 L577 615.6 M577 602.0 L556 615.6 M556 602.0 H577 M556 615.6 L577 616.0 M577 615.6 L556 616.0 M556 615.6 H577 " stroke="#ee9666" stroke-width="2" fill="none"/>
<path d="M547.5 616 V692 M585 616 V692" stroke="#ee9666" stroke-width="3"/><path d="M547.5 616.0 L585 633.5 M585 616.0 L547.5 633.5 M547.5 616.0 H585 M547.5 633.5 L585 651.0 M585 633.5 L547.5 651.0 M547.5 633.5 H585 M547.5 651.0 L585 668.5 M585 651.0 L547.5 668.5 M547.5 651.0 H585 M547.5 668.5 L585 686.0 M585 668.5 L547.5 686.0 M547.5 668.5 H585 M547.5 686.0 L585 692.0 M585 686.0 L547.5 692.0 M547.5 686.0 H585 " stroke="#ee9666" stroke-width="2" fill="none"/>
<path d="M445 391.5 Q520 383 563 379 Q700 381 842 386.5 M445 399 Q520 398.5 565 398.5 Q700 397.5 842 397.5 M842 386.5 V397.5 M445 391.5 V399" stroke="#ee9666" stroke-width="3" fill="none"/>
<path d="M445.0 392.5 L462.0 397 M462.0 392.5 L445.0 397 M445.0 391.5 V398 M462.0 390.7 L479.0 397 M479.0 390.7 L462.0 397 M462.0 389.7 V398 M479.0 389.0 L496.0 397 M496.0 389.0 L479.0 397 M479.0 388.0 V398 M496.0 387.2 L513.0 397 M513.0 387.2 L496.0 397 M496.0 386.2 V398 M513.0 385.4 L530.0 397 M530.0 385.4 L513.0 397 M513.0 384.4 V398 M530.0 383.6 L547.0 397 M547.0 383.6 L530.0 397 M530.0 382.6 V398 M547.0 381.9 L564.0 397 M564.0 381.9 L547.0 397 M547.0 380.9 V398 M564.0 380.1 L581.0 397 M581.0 380.1 L564.0 397 M564.0 379.1 V398 M581.0 380.4 L598.0 397 M598.0 380.4 L581.0 397 M581.0 379.4 V398 M598.0 380.9 L615.0 397 M615.0 380.9 L598.0 397 M598.0 379.9 V398 M615.0 381.4 L632.0 397 M632.0 381.4 L615.0 397 M615.0 380.4 V398 M632.0 381.8 L649.0 397 M649.0 381.8 L632.0 397 M632.0 380.8 V398 M649.0 382.3 L666.0 397 M666.0 382.3 L649.0 397 M649.0 381.3 V398 M666.0 382.7 L683.0 397 M683.0 382.7 L666.0 397 M666.0 381.7 V398 M683.0 383.2 L700.0 397 M700.0 383.2 L683.0 397 M683.0 382.2 V398 M700.0 383.7 L717.0 397 M717.0 383.7 L700.0 397 M700.0 382.7 V398 M717.0 384.1 L734.0 397 M734.0 384.1 L717.0 397 M717.0 383.1 V398 M734.0 384.6 L751.0 397 M751.0 384.6 L734.0 397 M734.0 383.6 V398 M751.0 385.0 L768.0 397 M768.0 385.0 L751.0 397 M751.0 384.0 V398 M768.0 385.5 L785.0 397 M785.0 385.5 L768.0 397 M768.0 384.5 V398 M785.0 386.0 L802.0 397 M802.0 386.0 L785.0 397 M785.0 385.0 V398 M802.0 386.4 L819.0 397 M819.0 386.4 L802.0 397 M802.0 385.4 V398 M819.0 386.9 L836.0 397 M836.0 386.9 L819.0 397 M819.0 385.9 V398 M836.0 387.3 L842.0 397 M842.0 387.3 L836.0 397 M836.0 386.3 V398 " stroke="#ee9666" stroke-width="1.8" fill="none"/>
<path d="M772.5 421 V507 Q775.5 514 778.5 507 V421 Z" fill="#89bce3" stroke="#0d5685" stroke-width="2.2"/>
<rect x="767.5" y="391.5" width="16" height="30" rx="1" fill="#ee9666" stroke="#0d5685" stroke-width="2.2"/>
<path d="M773.5 396 V416 M777.5 396 V416" stroke="#0d5685" stroke-width="1.8"/>
<path d="M317 701 H652" stroke="#2a2a2a" stroke-width="1.6"/>
<path d="M519 694 Q519 692 522 692 H612 Q615 692 615 695 V698 Q615 701 612 701 H522 Q519 701 519 698 Z" fill="#89bce3" stroke="#0d5685" stroke-width="2"/>
<path d="M530 696.5 H608" stroke="#0d5685" stroke-width="1.6" stroke-dasharray="5 4"/>
<rect x="522" y="701" width="90" height="2.5" fill="#ee9666"/>
<path d="M521 703 H529 V709 H521 Z M543 703 H590 V709 H543 Z M600 703 H611 V709 H600 Z" fill="#ee9666" stroke="#0d5685" stroke-width="2"/>
<rect x="311" y="700" width="54" height="47" fill="#1c1c1c" fill-opacity="0.92"/>
</svg>
<div class="t" style="left:316.5px;top:705.00px;font-size:20.0px;color:#fff;letter-spacing:-0.117px;">ports</div>
<div class="t" style="left:316.5px;top:728.00px;font-size:20.0px;color:#fff;letter-spacing:0.039px;">truck</div>
<div class="t" style="left:22.3px;top:725.00px;font-size:14.0px;color:#fff;letter-spacing:-0.703px;">VU DUY Hieu</div>

<!-- record -->
<div class="a" style="left:35px;top:69px;width:18px;height:18px;border-radius:50%;border:2px solid #fff;background:#1f1f1f"></div>
<div class="a" style="left:38px;top:72px;width:12px;height:12px;border-radius:50%;background:#c4314b"></div>
<div class="t" style="left:70.0px;top:72.00px;font-size:16.0px;color:#c8c8c8;letter-spacing:-0.612px;">03:02:10</div>
<!-- request control (behind google bar) -->
<div class="a" style="left:587px;top:62px;width:159px;height:34px;border:1px solid #5a5a5a;border-radius:3px;background:#252525"></div>
<div class="t" style="left:611.0px;top:72.00px;font-size:15.0px;font-weight:bold;color:#fff;letter-spacing:-0.156px;">Request control</div>
<div class="a" style="left:784px;top:61px;width:1px;height:34px;background:#3d3d3d"></div>
<div class="a" style="left:1079px;top:60px;width:1px;height:36px;background:#3d3d3d"></div>
<!-- google meet bar -->
<div class="a" style="left:347px;top:35px;width:432px;height:46px;background:#f4f4f4;box-shadow:0 1px 2px rgba(0,0,0,.3)"></div>
<div class="a" style="left:359px;top:52px;width:2px;height:12px;background:#b5b5b5"></div>
<div class="a" style="left:363px;top:52px;width:2px;height:12px;background:#b5b5b5"></div>
<div class="t" style="left:376.5px;top:50.00px;font-size:14.0px;color:#3c4043;letter-spacing:-0.288px;">meet.google.com is sharing a window.</div>
<div class="a" style="left:615px;top:40px;width:113px;height:36px;background:#1a73e8;border-radius:4px"></div>
<div class="t" style="left:632.0px;top:52.00px;font-size:13.5px;font-weight:bold;color:#fff;letter-spacing:-0.547px;">Stop sharing</div>
<div class="t" style="left:739.0px;top:50.00px;font-size:14.0px;color:#1a73e8;letter-spacing:-0.266px;">Hide</div>
<!-- toolbar icons -->
<svg class="a" style="left:0;top:0" width="1432" height="112" viewBox="0 0 1432 112">
 <!-- mic box -->
 <rect x="1148.5" y="51.5" width="53" height="53" rx="2" fill="#0f0f0f" stroke="#c8c8c8" stroke-width="1.2"/>
 <g fill="none" stroke="#d6d6d6" stroke-width="1.6" stroke-linecap="round" stroke-linejoin="round">
  <!-- people -->
  <circle cx="821" cy="72" r="4.6"/>
  <circle cx="830.7" cy="73.6" r="2.9"/>
  <path d="M813.5 81.5 Q813.5 79.5 815.5 79.5 H826.5 Q828.5 79.5 828.5 81.5 V83 Q828.5 87.5 821 87.5 Q813.5 87.5 813.5 83 Z"/>
  <path d="M829.5 79.5 H833 Q835 79.5 835 81.5 V82.5 Q835 86 830 86"/>
  <!-- chat -->
  <path d="M868.3 88.8 L869.8 83 A10 10 0 1 1 873.5 86.7 Z"/>
  <path d="M873.5 76.5 H883.5 M873.5 80.8 H879.5"/>
  <!-- react hand -->
  <path d="M924 83 Q921.5 80 921.5 76 V70.5 Q921.5 69 923 69 Q924.5 69 924.5 70.5 V68.8 Q924.5 67.2 926 67.2 Q927.5 67.2 927.5 68.8 Q927.5 67.2 929 67.2 Q930.5 67.2 930.5 68.8 V69.5 Q930.5 68.3 931.8 68.3 Q933.2 68.3 933.2 69.8 V76.5"/>
  <path d="M924.5 70.5 V75 M927.5 68.8 V74.5 M930.5 69.5 V74.5"/>
  <circle cx="936.5" cy="83" r="6.2"/>
  <path d="M934 84.5 Q936.5 87 939 84.5"/>
  <!-- view -->
  <rect x="976.5" y="69.5" width="17.5" height="17.5" rx="2.5"/>
  <path d="M976.5 78.5 H982.5 Q985 78.5 985 81 V87"/>
  <!-- mic off in box -->
  <path d="M1171 70.5 Q1171 67.3 1175 67.3 Q1179 67.3 1179 70.5 V77 Q1179 81 1175 81 Q1171 81 1171 77 Z"/>
  <path d="M1167.5 76.5 Q1167.5 84.5 1175 84.5 Q1182.5 84.5 1182.5 76.5 M1175 84.5 V89"/>
  <path d="M1164.5 67 L1186 89"/>
 </g>
 <g fill="#d6d6d6">
  <circle cx="934.3" cy="81.5" r="0.9"/><circle cx="938.7" cy="81.5" r="0.9"/>
  <circle cx="1031" cy="78.3" r="2.2"/><circle cx="1039" cy="78.3" r="2.2"/><circle cx="1047" cy="78.3" r="2.2"/>
 </g>
 <!-- orange dot -->
 <circle cx="887.5" cy="70" r="5.6" fill="#1f1f1f"/>
 <circle cx="887.5" cy="70" r="4.2" fill="#e97548"/>
 <!-- underline -->
 <rect x="806" y="98" width="36" height="2.5" rx="1.2" fill="#7f85f5"/>
</svg>


<!-- camera off, share, leave -->
<svg class="a" style="left:0;top:0" width="1432" height="112" viewBox="0 0 1432 112">
 <g fill="#f0f0f0">
  <path d="M1112 70.5 H1126 Q1128.5 70.5 1128.5 73 V74.5 L1133 71.5 V85.5 L1128.5 82.5 V84 Q1128.5 86.5 1126 86.5 H1112 Q1109.5 86.5 1109.5 84 V73 Q1109.5 70.5 1112 70.5 Z"/>
 </g>
 <path d="M1111 67.5 L1131.5 88.5" stroke="#1f1f1f" stroke-width="3.2"/>
 <path d="M1111 67.5 L1131.5 88.5" stroke="#f0f0f0" stroke-width="1.4"/>
 <rect x="1217" y="70" width="23" height="17" rx="2.5" fill="#f0f0f0"/>
 <path d="M1228.5 83 V74 M1224.8 77.5 L1228.5 73.8 L1232.2 77.5" fill="none" stroke="#1f1f1f" stroke-width="1.6" stroke-linecap="round" stroke-linejoin="round"/>
 <rect x="1274" y="60.5" width="133" height="35.5" rx="2" fill="#c4314b"/>
 <rect x="1370" y="60.5" width="1.2" height="35.5" fill="#a72a40"/>
 <path d="M1286.5 80.5 Q1286 75.5 1297.5 75 Q1309 75.5 1308.5 80.5 L1308 82 Q1307.5 83 1306 82.6 L1302.5 81.6 Q1301.3 81.2 1301.3 80 V78.6 Q1297.5 77.5 1293.7 78.6 V80 Q1293.7 81.2 1292.5 81.6 L1289 82.6 Q1287.5 83 1287 82 Z" fill="#fff"/>
 <path d="M1383 75.5 L1389.5 82 L1396 75.5" fill="none" stroke="#fff" stroke-width="1.4" stroke-linecap="round" stroke-linejoin="round"/>
</svg>
<div class="t" style="left:1318.0px;top:72.00px;font-size:15.0px;font-weight:bold;color:#fff;letter-spacing:-0.637px;">Leave</div>
<!-- window controls -->
<svg class="a" style="left:0;top:0" width="1432" height="45" viewBox="0 0 1432 45">
 <g fill="none" stroke="#e8e8e8" stroke-width="1.1">
  <path d="M1313 21 H1326"/>
  <rect x="1356.5" y="16.5" width="12.5" height="12.5" rx="1"/>
  <path d="M1359.5 16.5 V15 Q1359.5 14 1360.5 14 H1371 Q1372 14 1372 15 V25.5 Q1372 26.5 1371 26.5 H1369"/>
  <path d="M1402.5 15 L1416 28.5 M1416 15 L1402.5 28.5"/>
 </g>
</svg>


<!-- banner content -->
<svg class="a" style="left:12px;top:129px" width="20" height="18" viewBox="0 0 20 18">
 <path d="M10 1.2 L19 16.8 H1 Z" fill="#fff" stroke="#fff" stroke-width="1.2" stroke-linejoin="round"/>
 <rect x="9.1" y="6" width="1.8" height="6" fill="#3c3d68"/>
 <rect x="9.1" y="13.2" width="1.8" height="1.8" fill="#3c3d68"/>
</svg>
<div class="t" style="left:39.5px;top:132.00px;font-size:15.6px;font-weight:bold;color:#fff;letter-spacing:-0.261px;">Recording has started.</div>
<div class="t" style="left:213.0px;top:132.00px;font-size:15.6px;color:#fff;letter-spacing:0.015px;">This meeting is being recorded. By joining, you are giving consent for this meeting to be recorded. <span style="text-decoration:underline">Priv</span>...</div>
<div class="a" style="left:955px;top:121px;width:107px;height:35px;border:1px solid #6a6b93;border-radius:3px"></div>
<div class="t" style="left:981.5px;top:132.00px;font-size:15.5px;font-weight:bold;color:#fff;letter-spacing:-0.992px;">Dismiss</div>
<!-- tooltip -->
<div class="a" style="left:1148px;top:112px;width:187px;height:35px;background:#3b3b3b;border-radius:4px"></div>
<div class="a" style="left:1169px;top:107px;width:0;height:0;border-left:5px solid transparent;border-right:5px solid transparent;border-bottom:5px solid #3b3b3b"></div>
<div class="t" style="left:1161.6px;top:122.00px;font-size:15.5px;color:#fff;letter-spacing:0.218px;">Unmute (Ctrl+Shift+M)</div>

<svg class="a" style="left:1074px;top:112px" width="358" height="648" viewBox="1074 112 358 648">
<g fill="#e8e8e8"><circle cx="1349" cy="167.5" r="1.4"/><circle cx="1355.3" cy="167.5" r="1.4"/><circle cx="1361.6" cy="167.5" r="1.4"/></g>
<path d="M1384.5 161.5 L1397.5 174.5 M1397.5 161.5 L1384.5 174.5" stroke="#e8e8e8" stroke-width="1.3"/>
<rect x="1096.5" y="203.5" width="313" height="35.5" rx="2" fill="#292929"/>
<circle cx="1388" cy="220.5" r="5.6" fill="none" stroke="#e8e8e8" stroke-width="1.5"/><path d="M1392 224.5 L1397.5 230" stroke="#e8e8e8" stroke-width="1.6" stroke-linecap="round"/>
<rect x="1096.5" y="250.5" width="313" height="35" rx="2" fill="#262626" stroke="#5a5a5a" stroke-width="1"/>
<g fill="none" stroke="#e8e8e8" stroke-width="1.3"><circle cx="1201.5" cy="269" r="2.7"/><circle cx="1210.3" cy="263.5" r="2.7"/><circle cx="1210.3" cy="274.5" r="2.7"/><path d="M1204 267.5 L1207.8 265 M1204 270.5 L1207.8 273"/></g>
<path d="M1083 330 H1090.5 L1086.75 334.5 Z" fill="#8a8a8a" stroke="#8a8a8a" stroke-width="0.8" stroke-linejoin="round"/>
<rect x="1302.5" y="319.5" width="80" height="27" rx="2" fill="#1f1f1f" stroke="#6b6b6b" stroke-width="1"/>
<rect x="1400.5" y="310" width="8.5" height="171" rx="4.2" fill="#7a7a7a"/>
<defs><clipPath id="pc1"><circle cx="1116" cy="377" r="18"/></clipPath></defs><g clip-path="url(#pc1)"><g transform="translate(1098 359) scale(0.3600)"><rect x="0" y="0" width="100" height="100" fill="#6a1c22"/><rect x="0" y="0" width="100" height="45" fill="#cfc6c6"/><rect x="0" y="0" width="28" height="40" fill="#3f5048"/><rect x="29" y="0" width="9" height="42" fill="#8a1a28"/><rect x="46" y="0" width="9" height="38" fill="#8a1a28"/><rect x="66" y="0" width="34" height="20" fill="#c8302a"/><rect x="72" y="6" width="20" height="4" fill="#e8c040"/><rect x="60" y="22" width="40" height="40" fill="#6e2a22"/><path d="M72 30 H86 V42 Q79 50 72 42 Z" fill="#eef0f8"/><rect x="76" y="33" width="6" height="7" fill="#4050a0"/><rect x="92" y="25" width="8" height="30" fill="#b8b0b0"/><ellipse cx="20" cy="46" rx="24" ry="12" fill="#7a9a30"/><circle cx="10" cy="44" r="7" fill="#e0d040"/><circle cx="26" cy="42" r="6" fill="#e8c838"/><circle cx="36" cy="36" r="5" fill="#d83048"/><circle cx="18" cy="36" r="4" fill="#c83040"/><rect x="0" y="54" width="48" height="8" fill="#e0d8d8"/><rect x="0" y="62" width="100" height="38" fill="#5e161c"/><path d="M0 62 H100 V68 H0 Z" fill="#7a2028"/><path d="M44 40 Q50 34 57 40 L60 100 H40 Z" fill="#e2303a"/><ellipse cx="50" cy="33" rx="4.5" ry="5.5" fill="#e8b8a0"/><path d="M45 32 Q45 25 50 25 Q56 25 56 32 L57 46 L54 40 L53 32 Q50 29 47 32 L46 44 L44 46 Z" fill="#2a1818"/></g></g>
<circle cx="1128.5" cy="389.5" r="6.8" fill="#1f1f1f"/><circle cx="1128.5" cy="389.5" r="5.2" fill="#6bb700"/><path d="M1126 389.7 L1127.8 391.4 L1131 388" stroke="#fff" stroke-width="1.2" fill="none"/>
<circle cx="1116" cy="433" r="18" fill="#fbe9d4"/>
<circle cx="1116" cy="489" r="18" fill="#c9d6ea"/>
<circle cx="1116" cy="545" r="18" fill="#fbe9d4"/>
<circle cx="1116" cy="601" r="18" fill="#f7eacc"/>
<circle cx="1116" cy="657" r="18" fill="#f7eacc"/>
<circle cx="1116" cy="657" r="20.8" fill="none" stroke="#8f95f8" stroke-width="2"/>
<circle cx="1116" cy="713" r="18" fill="#e9ccd3"/>
<circle cx="1116" cy="769" r="18" fill="#dbe8d5"/>
<g transform="translate(1362.5 377) scale(0.95)" fill="none" stroke="#e8e8e8" stroke-width="1.5" stroke-linecap="round" stroke-linejoin="round">
<path d="M-3.6 -4 V-5.5 Q-3.6 -9 0 -9 Q3.6 -9 3.6 -5.5 V0.5 Q3.6 1.2 3.3 1.8 M-3.6 -4 V0.5 Q-3.6 4.3 0 4.3 Q1 4.3 1.8 3.8"/>
<path d="M-6.5 -0.5 Q-6.5 6.8 0 6.8 Q2.8 6.8 4.5 5.2 M6.5 -0.5 Q6.5 1.5 5.8 2.8 M0 6.8 V9.5"/>
<path d="M-8.5 -9.5 L8.5 9.5"/>
</g>
<g transform="translate(1362.5 433) scale(0.95)" fill="none" stroke="#e8e8e8" stroke-width="1.5" stroke-linecap="round" stroke-linejoin="round">
<path d="M-3.6 -4 V-5.5 Q-3.6 -9 0 -9 Q3.6 -9 3.6 -5.5 V0.5 Q3.6 1.2 3.3 1.8 M-3.6 -4 V0.5 Q-3.6 4.3 0 4.3 Q1 4.3 1.8 3.8"/>
<path d="M-6.5 -0.5 Q-6.5 6.8 0 6.8 Q2.8 6.8 4.5 5.2 M6.5 -0.5 Q6.5 1.5 5.8 2.8 M0 6.8 V9.5"/>
<path d="M-8.5 -9.5 L8.5 9.5"/>
</g>
<g transform="translate(1362.5 489) scale(0.95)" fill="none" stroke="#e8e8e8" stroke-width="1.5" stroke-linecap="round" stroke-linejoin="round">
<path d="M-3.6 -4 V-5.5 Q-3.6 -9 0 -9 Q3.6 -9 3.6 -5.5 V0.5 Q3.6 1.2 3.3 1.8 M-3.6 -4 V0.5 Q-3.6 4.3 0 4.3 Q1 4.3 1.8 3.8"/>
<path d="M-6.5 -0.5 Q-6.5 6.8 0 6.8 Q2.8 6.8 4.5 5.2 M6.5 -0.5 Q6.5 1.5 5.8 2.8 M0 6.8 V9.5"/>
<path d="M-8.5 -9.5 L8.5 9.5"/>
</g>
<g transform="translate(1362.5 545) scale(0.95)" fill="none" stroke="#e8e8e8" stroke-width="1.5" stroke-linecap="round" stroke-linejoin="round">
<path d="M-3.6 -4 V-5.5 Q-3.6 -9 0 -9 Q3.6 -9 3.6 -5.5 V0.5 Q3.6 1.2 3.3 1.8 M-3.6 -4 V0.5 Q-3.6 4.3 0 4.3 Q1 4.3 1.8 3.8"/>
<path d="M-6.5 -0.5 Q-6.5 6.8 0 6.8 Q2.8 6.8 4.5 5.2 M6.5 -0.5 Q6.5 1.5 5.8 2.8 M0 6.8 V9.5"/>
<path d="M-8.5 -9.5 L8.5 9.5"/>
</g>
<g transform="translate(1362.5 601) scale(0.95)" fill="none" stroke="#e8e8e8" stroke-width="1.5" stroke-linecap="round" stroke-linejoin="round">
<path d="M-3.6 -4 V-5.5 Q-3.6 -9 0 -9 Q3.6 -9 3.6 -5.5 V0.5 Q3.6 1.2 3.3 1.8 M-3.6 -4 V0.5 Q-3.6 4.3 0 4.3 Q1 4.3 1.8 3.8"/>
<path d="M-6.5 -0.5 Q-6.5 6.8 0 6.8 Q2.8 6.8 4.5 5.2 M6.5 -0.5 Q6.5 1.5 5.8 2.8 M0 6.8 V9.5"/>
<path d="M-8.5 -9.5 L8.5 9.5"/>
</g>
<g transform="translate(1362.5 713) scale(0.95)" fill="none" stroke="#e8e8e8" stroke-width="1.5" stroke-linecap="round" stroke-linejoin="round">
<path d="M-3.6 -4 V-5.5 Q-3.6 -9 0 -9 Q3.6 -9 3.6 -5.5 V0.5 Q3.6 1.2 3.3 1.8 M-3.6 -4 V0.5 Q-3.6 4.3 0 4.3 Q1 4.3 1.8 3.8"/>
<path d="M-6.5 -0.5 Q-6.5 6.8 0 6.8 Q2.8 6.8 4.5 5.2 M6.5 -0.5 Q6.5 1.5 5.8 2.8 M0 6.8 V9.5"/>
<path d="M-8.5 -9.5 L8.5 9.5"/>
</g>
<g transform="translate(1362.5 657)" fill="#f0f0f0" stroke="none"><rect x="-3.4" y="-9" width="6.8" height="12.5" rx="3.4"/></g>
<g transform="translate(1362.5 657)" fill="none" stroke="#f0f0f0" stroke-width="1.5" stroke-linecap="round"><path d="M-6 0.5 Q-6 6.5 0 6.5 Q6 6.5 6 0.5 M0 6.5 V9.5"/></g>
</svg>
<div class="t" style="left:1096.5px;top:156.00px;font-size:19.0px;font-weight:bold;color:#fff;letter-spacing:-0.661px;">Participants</div>
<div class="t" style="left:1110.0px;top:213.00px;font-size:16.3px;color:#b8b8b8;letter-spacing:-0.286px;">Invite someone or dial a number</div>
<div class="t" style="left:1226.0px;top:262.00px;font-size:16.0px;font-weight:bold;color:#fff;letter-spacing:-0.700px;">Share invite</div>
<div class="t" style="left:1097.3px;top:326.00px;font-size:14.8px;color:#e0e0e0;letter-spacing:-0.660px;">In this meeting (212)</div>
<div class="t" style="left:1318.0px;top:327.00px;font-size:15.0px;font-weight:bold;color:#fff;letter-spacing:-0.978px;">Mute all</div>
<div class="t" style="left:1142.6px;top:362.00px;font-size:16.0px;color:#fff;letter-spacing:-0.414px;">Lê Hà Minh</div>
<div class="t" style="left:1142.6px;top:380.00px;font-size:14.0px;color:#a8a8a8;letter-spacing:-0.559px;">Organizer</div>
<div class="t" style="left:1143.0px;top:426.00px;font-size:16.0px;color:#fff;letter-spacing:-0.514px;">1854010035@sv.ut.edu.vn</div>
<div class="t" style="left:1143.0px;top:482.00px;font-size:16.0px;color:#fff;letter-spacing:-0.443px;">18H4010024 - Võ Ngọc Trầ...</div>
<div class="t" style="left:1143.0px;top:538.00px;font-size:16.0px;color:#fff;letter-spacing:-0.446px;">18H4010046 - Võ Thị Kim ...</div>
<div class="t" style="left:1142.8px;top:594.00px;font-size:16.0px;color:#fff;letter-spacing:-0.425px;">Anh Nhan</div>
<div class="t" style="left:1142.8px;top:650.00px;font-size:16.0px;font-weight:bold;color:#fff;letter-spacing:-0.950px;">Bích Hoài</div>
<div class="t" style="left:1142.8px;top:706.00px;font-size:16.0px;color:#fff;letter-spacing:-0.373px;">Bùi Ngọc Quỳnh Trâm</div>
<div class="t" style="left:1113.0px;top:425.00px;font-size:15.0px;color:#8b6a3e;letter-spacing:-2.844px;">1</div>
<div class="t" style="left:1113.0px;top:481.00px;font-size:15.0px;color:#2a4a80;letter-spacing:-2.844px;">1</div>
<div class="t" style="left:1113.0px;top:537.00px;font-size:15.0px;color:#8b6a3e;letter-spacing:-2.844px;">1</div>
<div class="t" style="left:1105.5px;top:594.00px;font-size:15.0px;color:#7d5d1c;letter-spacing:-0.344px;">AN</div>
<div class="t" style="left:1106.0px;top:650.00px;font-size:15.0px;color:#7d5d1c;letter-spacing:-1.144px;">BH</div>
<div class="t" style="left:1106.0px;top:706.00px;font-size:15.0px;color:#7a2434;letter-spacing:-1.172px;">BT</div>
<svg class="a" style="left:1074px;top:112px" width="358" height="648" viewBox="1074 112 358 648">
<circle cx="1128.5" cy="445.7" r="6.8" fill="#1f1f1f"/><circle cx="1128.5" cy="445.7" r="5.3" fill="#c4314b"/>
<circle cx="1128.5" cy="501.7" r="6.8" fill="#1f1f1f"/><circle cx="1128.5" cy="501.7" r="5.3" fill="#c4314b"/>
<circle cx="1128.5" cy="557.7" r="6.8" fill="#1f1f1f"/><circle cx="1128.5" cy="557.7" r="5.3" fill="#c4314b"/>
<circle cx="1128.5" cy="613.7" r="6.8" fill="#1f1f1f"/><circle cx="1128.5" cy="613.7" r="5.3" fill="#c4314b"/>
<circle cx="1128.5" cy="669.7" r="6.8" fill="#1f1f1f"/><circle cx="1128.5" cy="669.7" r="5.3" fill="#c4314b"/>
<circle cx="1128.5" cy="725.7" r="6.8" fill="#1f1f1f"/><circle cx="1128.5" cy="725.7" r="5.3" fill="#c4314b"/>
</svg>
<!-- taskbar -->
<svg class="a" style="left:0;top:760px" width="1432" height="45" viewBox="0 760 1432 45">
<defs><linearGradient id="edg" x1="0" y1="0" x2="1" y2="1"><stop offset="0" stop-color="#38c0d8"/><stop offset="0.6" stop-color="#2ea0e0"/><stop offset="1" stop-color="#68d050"/></linearGradient><linearGradient id="edg2" x1="0" y1="0" x2="0" y2="1"><stop offset="0" stop-color="#1078d0"/><stop offset="1" stop-color="#0c5aa8"/></linearGradient></defs>
<linearGradient id="tbg" x1="0" y1="0" x2="1432" y2="0" gradientUnits="userSpaceOnUse"><stop offset="0" stop-color="#2f3a2a"/><stop offset="0.33" stop-color="#3d4334"/><stop offset="0.6" stop-color="#3a4133"/><stop offset="0.7" stop-color="#30392b"/><stop offset="1" stop-color="#2e382a"/></linearGradient>
<rect x="0" y="760" width="1432" height="45" fill="url(#tbg)"/>
<rect x="0" y="760" width="54" height="45" fill="#2f3a2a"/>
<g fill="#fff"><path d="M18 776 L26 775 V782.2 H18 Z"/><path d="M27 774.8 L36 773.6 V782.2 H27 Z"/><path d="M18 783.2 H26 V790.3 L18 789.3 Z"/><path d="M27 783.2 H36 V791.5 L27 790.4 Z"/></g>
<rect x="54" y="760" width="384.5" height="45" fill="#a8a8a8"/>
<rect x="55" y="761.5" width="382.5" height="43.5" fill="#f0f0f0"/>
<circle cx="80.3" cy="779.5" r="5.6" fill="none" stroke="#1a1a1a" stroke-width="1.3"/><path d="M76.3 783.6 L67.5 791.5" stroke="#1a1a1a" stroke-width="1.4" stroke-linecap="round"/>
<circle cx="465.3" cy="782.6" r="7.6" fill="none" stroke="#fff" stroke-width="2.3"/>
<g fill="none" stroke="#e8e8e8" stroke-width="1.2"><rect x="511.5" y="777" width="11" height="11"/><path d="M510.5 774.5 H523.5 M510.5 790.5 H523.5 M527 774 V777.5 M527 780 V791"/></g><circle cx="527" cy="778.5" r="1" fill="#fff"/>
<path d="M558 774 Q558 772.5 559.5 772.5 H566 L568 774.5 H581.5 Q583 774.5 583 776 V791 Q583 792.5 581.5 792.5 H559.5 Q558 792.5 558 791 Z" fill="#f8d65a"/>
<path d="M558 774 Q558 772.5 559.5 772.5 H566 L568 774.5 H570 V777 H558 Z" fill="#e0a82a"/>
<path d="M565 792.5 V784.5 H576 V792.5 H573 V787.5 H568 V792.5 Z" fill="#3c8ee0"/>
<path d="M601 775.5 L614.5 766.5 L628 775.5 V792.5 H601 Z" fill="#0f63c0"/>
<path d="M603 776 H626 L614.5 784 Z" fill="#e8eef4"/>
<path d="M601 777 L614.5 786 L628 777 V792.5 H601 Z" fill="#28a8ea"/>
<path d="M601 792.5 L614.5 783 L628 792.5 Z" fill="#1b8ad8" fill-opacity="0.6"/>
<circle cx="658.5" cy="782.5" r="13.5" fill="url(#edg)"/>
<path d="M662 786 Q668 790 674 787 L674 798 H660 Z" fill="#3c4233"/>
<path d="M645 782 Q645 797 660 796.5 Q668 796 673 790 Q666 793 659 790 Q651 786 654 779 Q649 778 645 782 Z" fill="#0c5fb0"/>
<ellipse cx="660" cy="783.5" rx="5" ry="3.4" fill="#3c4233"/>
<rect x="700" y="773.5" width="13.5" height="18" fill="#eef2fa" stroke="#2b579a" stroke-width="1.4"/>
<g stroke="#2b579a" stroke-width="1"><path d="M703 777 H711 M703 779.5 H711 M703 782 H711 M703 784.5 H711 M703 787 H711"/></g>
<path d="M689.5 774.5 L704 772 V794 L689.5 791.5 Z" fill="#2b579a"/>
<text x="691.2" y="787.5" font-family="Liberation Sans" font-weight="bold" font-size="10" fill="#fff">W</text>
<path d="M733 773 H757 V795 Q757 796 756 796 H734 Q733 796 733 795 Z" fill="#f4f4f4"/>
<path d="M739.5 773 V770 Q739.5 766.5 745 766.5 Q750.5 766.5 750.5 770 V773" fill="none" stroke="#f4f4f4" stroke-width="1.6"/>
<rect x="740.5" y="781" width="4" height="4" fill="#f25022"/><rect x="745.3" y="781" width="4" height="4" fill="#7fba00"/><rect x="740.5" y="785.8" width="4" height="4" fill="#00a4ef"/><rect x="745.3" y="785.8" width="4" height="4" fill="#ffb900"/>
<rect x="768" y="760" width="41" height="45" fill="#a3662f"/>
<rect x="804" y="760" width="5" height="45" fill="#b56f33"/>
<rect x="768" y="802.5" width="41" height="2.5" fill="#f7821f"/>
<circle cx="793" cy="773.5" r="4.5" fill="#7b83eb"/><circle cx="786" cy="773" r="3.5" fill="#5059c9"/>
<path d="M782 778 H799 V788 Q799 796 790.5 796 Q782 796 782 788 Z" fill="#5b63d0"/>
<rect x="772" y="776" width="14" height="14" rx="1.5" fill="#4b53bc"/>
<text x="775" y="787.5" font-family="Liberation Sans" font-weight="bold" font-size="11" fill="#fff">T</text>
<circle cx="794.5" cy="789.5" r="7.2" fill="#c4314b" stroke="#a3662f" stroke-width="1"/>
<text x="791.2" y="794" font-family="Liberation Sans" font-weight="bold" font-size="11.5" fill="#fff">1</text>
<path d="M819 782 Q819 768.5 832.5 768.5 Q846 768.5 846 782 Q846 795.5 832.5 795.5 Q826 795.5 822 792.5 L818.5 794 L820 789.5 Q819 786 819 782 Z" fill="#fff"/>
<path d="M822 780 Q822 771 832.5 771 Q843 771 843 780 Q843 789 832.5 789 Q824 789 822 783 Z" fill="#0f8ff0"/>
<text x="824" y="783.5" font-family="Liberation Sans" font-weight="bold" font-size="8" fill="#fff">Zalo</text>
<circle cx="838.3" cy="789.4" r="9" fill="#e00"/>
<text x="834.5" y="794.5" font-family="Liberation Sans" font-weight="bold" font-size="13" fill="#fff">1</text>
<rect x="872" y="773" width="15.5" height="19" fill="#fdf0ea" stroke="#c43e1c" stroke-width="1.4"/>
<path d="M876.5 776 A4.5 4.5 0 1 0 881 780.5 H876.5 Z" fill="#d35230"/><path d="M875 786 H885 M875 789 H885" stroke="#c43e1c" stroke-width="1"/>
<path d="M862.5 774.5 L877 772 V794 L862.5 791.5 Z" fill="#c43e1c"/>
<text x="864.5" y="788" font-family="Liberation Sans" font-weight="bold" font-size="11" fill="#fff">P</text>
<circle cx="918" cy="782.5" r="12.8" fill="#db4437"/><path d="M918 782.5 L906.9 776.1 A12.8 12.8 0 0 0 918 795.3 Z" fill="#0f9d58"/><path d="M918 782.5 L918 795.3 A12.8 12.8 0 0 0 929.1 776.1 Z" fill="#ffcd40"/><circle cx="918" cy="782.5" r="5.8" fill="#fff"/><circle cx="918" cy="782.5" r="4.5" fill="#4285f4"/>
<circle cx="927" cy="790" r="8" fill="#9a9a70"/><circle cx="925" cy="788" r="3" fill="#c8b090"/><circle cx="930" cy="792" r="3" fill="#706850"/>
<circle cx="961.5" cy="782.5" r="12.8" fill="#db4437"/><path d="M961.5 782.5 L950.4 776.1 A12.8 12.8 0 0 0 961.5 795.3 Z" fill="#0f9d58"/><path d="M961.5 782.5 L961.5 795.3 A12.8 12.8 0 0 0 972.6 776.1 Z" fill="#ffcd40"/><circle cx="961.5" cy="782.5" r="5.8" fill="#fff"/><circle cx="961.5" cy="782.5" r="4.5" fill="#4285f4"/>
<rect x="554" y="802.6" width="34" height="2.4" fill="#76b9ed"/>
<rect x="642" y="802.6" width="33" height="2.4" fill="#76b9ed"/>
<rect x="685" y="802.6" width="32.5" height="2.4" fill="#76b9ed"/>
<rect x="815" y="802.6" width="33" height="2.4" fill="#76b9ed"/>
<rect x="858" y="802.6" width="33" height="2.4" fill="#76b9ed"/>
<rect x="902" y="802.6" width="33" height="2.4" fill="#76b9ed"/>
<rect x="945" y="802.6" width="33" height="2.4" fill="#76b9ed"/>
<rect x="986" y="760" width="19" height="45" fill="#e8e8e8"/>
<path d="M990.5 777.5 L995.5 772.5 L1000.5 777.5 M990.5 789.5 L995.5 794.5 L1000.5 789.5" fill="none" stroke="#333" stroke-width="1.3"/>
<g fill="#f2f2f2"><circle cx="1043" cy="784" r="5.5"/><circle cx="1050" cy="780" r="7"/><circle cx="1055" cy="785" r="4.5"/><rect x="1040" y="784" width="17" height="5.5" rx="2.7"/></g>
<path d="M1046.5 787 Q1048.5 790 1046.5 792 Q1044.5 790 1046.5 787 Z" fill="#3a9ae0"/><path d="M1042 784 Q1048 778 1054 782" fill="none" stroke="#aad0f0" stroke-width="1"/>
<path d="M1119.5 786.5 L1126 780 L1132.5 786.5" fill="none" stroke="#fff" stroke-width="1.4"/>
<rect x="1144.5" y="775" width="16.5" height="16" fill="#f0d0d4"/><rect x="1144.5" y="775" width="16.5" height="16" fill="none" stroke="#c86070" stroke-width="1"/>
<path d="M1147.5 778 L1152.5 788.5 L1158.5 777" fill="none" stroke="#d0202a" stroke-width="2.5"/>
<g fill="none" stroke="#fff" stroke-width="1.3"><rect x="1175" y="779.5" width="12.5" height="8"/><path d="M1171 783.5 H1175 M1172.5 779.5 V776.5 M1174.5 779.5 V776.5"/></g><rect x="1176.5" y="781" width="9.5" height="5" fill="#fff"/>
<g fill="none" stroke="#fff" stroke-width="1.2"><path d="M1201 788 A12 12 0 0 1 1213 776"/><path d="M1204.5 788.5 A8.5 8.5 0 0 1 1213 780"/><path d="M1208 789 A5 5 0 0 1 1213 784" /></g><circle cx="1213" cy="789.5" r="1.3" fill="#fff"/>
<g fill="none" stroke="#fff" stroke-width="1.2"><path d="M1225.5 780 H1229 L1233.5 776 V792 L1229 788 H1225.5 Z"/><path d="M1236 780.5 Q1238 784 1236 787.5 M1238.5 778.5 Q1241.5 784 1238.5 789.5"/></g>
<path d="M1390 772.5 H1410 V787.5 H1398 L1393 791.5 V787.5 H1390 Z" fill="#fff"/>
<path d="M1393 776.5 H1407 M1393 779.5 H1407 M1393 782.5 H1403" stroke="#2e382a" stroke-width="1"/>
<circle cx="1403.5" cy="791" r="10.5" fill="#2e382a" stroke="#bbb" stroke-width="1.2"/>
<rect x="1426" y="760" width="1" height="45" fill="#777"/>
</svg>
<div class="t" style="left:98.9px;top:776.00px;font-size:16.5px;color:#1c1c1c;letter-spacing:0.053px;">Type here to search</div>
<div class="t" style="left:1069.4px;top:776.00px;font-size:15.0px;color:#fff;letter-spacing:-0.586px;">88°F</div>
<div class="t" style="left:1255.0px;top:776.00px;font-size:14.0px;color:#fff;transform:scaleX(0.84);transform-origin:0 0;">ENG</div>
<div class="t" style="left:1301.6px;top:765.00px;font-size:14.5px;color:#fff;letter-spacing:-0.615px;">10:11 AM</div>
<div class="t" style="left:1295.0px;top:787.00px;font-size:14.5px;color:#fff;letter-spacing:-0.453px;">07/08/2021</div>
<div class="t" style="left:1396.5px;top:785.00px;font-size:13.5px;font-weight:bold;color:#fff;letter-spacing:-0.531px;">29</div>

</body></html>
